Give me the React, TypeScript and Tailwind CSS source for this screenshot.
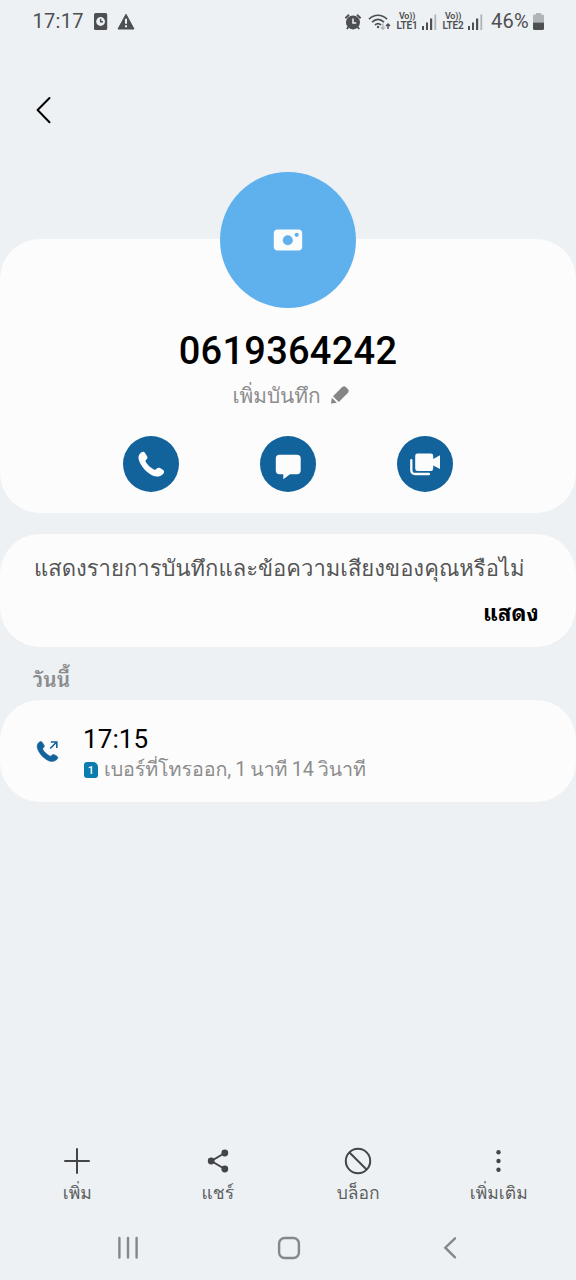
import React from "react";

const handset =
  "M18.5 16.3C20.2 15.2 21.4 15.9 22.2 17.2L24.1 20.2C24.9 21.6 24.4 22.8 23.2 23.8C22.3 24.6 22.3 25.2 23.1 26.4C24.9 29.2 27.8 31.8 30.8 33.4C32 34.1 32.6 34 33.3 33.1C34.3 31.8 35.6 31.3 37 32.1L39.8 33.8C41.2 34.7 41.6 36 40.5 37.4C38.3 40.4 33.7 41.5 29.5 39.5C23.5 36.5 18.6 31.2 16.4 25.6C14.7 21.4 15.5 18.2 18.5 16.3Z";

function Signal() {
  return (
    <svg width="15" height="16" viewBox="0 0 15 16" fill="#4d4f51">
      <rect x="0" y="12" width="2" height="4" />
      <rect x="4" y="8.5" width="2" height="7.5" />
      <rect x="8" y="4.5" width="2.2" height="11.5" />
      <rect x="12.4" y="0.5" width="1.8" height="15.5" fill="#b1b4b6" />
    </svg>
  );
}

function Volte({ slot }: { slot: string }) {
  return (
    <div className="flex w-[22px] flex-col items-center font-semibold text-[#4d4f51]">
      <span className="text-[9px] leading-[9px] tracking-[-0.2px] whitespace-nowrap">Vo))</span>
      <span className="text-[10px] leading-[10px] tracking-[-0.2px] whitespace-nowrap">LTE{slot}</span>
    </div>
  );
}

function StatusBar() {
  return (
    <header className="flex h-11 items-start text-[#4d4f51]">
      <div className="flex h-[43px] w-full items-center pl-[32.5px]">
        <span className="w-[61.5px] text-[20px] leading-[43px] tracking-[0.3px]">17:17</span>
        <svg width="14" height="17" viewBox="0 0 14 17">
          <rect x="0" y="0" width="13.2" height="17" rx="1.6" fill="#4d4f51" />
          <circle cx="6.6" cy="8.5" r="4.4" fill="#edf1f4" />
          <path d="M6.6 5.8V8.8H9" fill="none" stroke="#4d4f51" strokeWidth="1.4" />
        </svg>
        <svg className="ml-[8.5px]" width="18" height="17" viewBox="0 0 18 17">
          <path d="M9 1.2L17 16H1Z" fill="#4d4f51" stroke="#4d4f51" strokeLinejoin="round" />
          <path d="M9 5.8V10.8M9 12.2V14.2" stroke="#edf1f4" strokeWidth="2" />
        </svg>
        <div className="ml-[209.5px] flex items-center">
          <svg width="18" height="18" viewBox="0 0 18 18">
            <circle cx="9" cy="9.4" r="7" fill="#4d4f51" />
            <path d="M1.4 5.2L5 1.8M13 1.8L16.6 5.2M4.4 14L2.8 16M13.6 14L15.2 16" stroke="#4d4f51" strokeWidth="1.9" />
            <path d="M9 5.5V10H12.2" fill="none" stroke="#edf1f4" strokeWidth="1.5" />
          </svg>
          <svg className="ml-[6px]" width="23" height="18" viewBox="0 0 23 18" fill="none" stroke="#4d4f51">
            <path d="M1 6.2C6.5.9 13.5.9 19 6.2M4 9.2C8 5.4 12 5.4 16 9.2M7 12C9 10.2 11 10.2 13 12" strokeWidth="1.7" />
            <circle cx="10" cy="14" r="1.2" fill="#4d4f51" stroke="none" />
            <path d="M14.8 10.5V16M12.8 14.2L14.8 16.2L16.8 14.2" stroke="#b1b4b6" strokeWidth="1.4" />
            <path d="M20 16V11M18 13L20 11L22 13" strokeWidth="1.5" />
          </svg>
          <div className="ml-[5px]"><Volte slot="1" /></div>
          <div className="ml-[4px]"><Signal /></div>
          <div className="ml-[5px]"><Volte slot="2" /></div>
          <div className="ml-[4px]"><Signal /></div>
          <span className="ml-[8px] w-[42px] text-[20px] leading-[43px] tracking-[0.2px]">46%</span>
          <svg width="11" height="17" viewBox="0 0 11 17">
            <path d="M3 0H8V1.5H9.5Q11 1.5 11 3V9.5H0V3Q0 1.5 1.5 1.5H3Z" fill="#b1b4b6" />
            <path d="M0 9.5H11V15.5Q11 17 9.5 17H1.5Q0 17 0 15.5Z" fill="#4d4f51" />
          </svg>
        </div>
      </div>
    </header>
  );
}

function RoundButton({ children }: { children: React.ReactNode }) {
  return (
    <button className="flex size-14 items-center justify-center rounded-full bg-[#12629c]">
      <svg width="56" height="56" viewBox="0 0 56 56" fill="#fcfcfc">{children}</svg>
    </button>
  );
}

function Action({ label, children }: { label: string; children: React.ReactNode }) {
  return (
    <button className="flex w-[140.5px] flex-col items-center">
      <svg width="30" height="30" viewBox="0 0 30 30" fill="none" stroke="#434547">{children}</svg>
      <span className="mt-[3px] text-[17.5px] leading-[28px] whitespace-nowrap text-[#5d5f61]">{label}</span>
    </button>
  );
}

export default function App() {
  return (
    <div className="flex h-[1280px] w-[576px] flex-col overflow-hidden bg-[#edf1f4] font-[Roboto,Loma,sans-serif]">
      <StatusBar />
      <nav className="flex h-[128px] pt-[50px] pl-[34px]">
        <svg width="20" height="32" viewBox="0 0 20 32" fill="none" stroke="#000" strokeWidth="2">
          <path d="M15.5 4L3.6 16L15.5 28.2" strokeLinecap="round" strokeLinejoin="round" />
        </svg>
      </nav>
      <div className="flex h-[67px] justify-center">
        <div className="relative z-10 flex size-[136px] shrink-0 items-center justify-center rounded-full bg-[#5fb1ee]">
          <svg width="30" height="22" viewBox="0 0 30 22">
            <rect x="0.8" y="0.6" width="28.4" height="20.8" rx="4" fill="#fcfcfc" />
            <circle cx="14.8" cy="11.2" r="5" fill="#5fb1ee" />
            <circle cx="23.7" cy="5.8" r="2.1" fill="#5fb1ee" />
          </svg>
        </div>
      </div>
      <section className="flex h-[274px] flex-col items-center rounded-[40px] bg-[#fcfcfc] pt-[88px]">
        <h1 className="text-[38px] leading-[48px] font-medium tracking-[0.25px] text-black">0619364242</h1>
        <div className="mt-[6px] flex h-[30px] items-center gap-[9px] pl-[6px] text-[#8d8d8d]">
          <span className="text-[20.8px] leading-[30px]">เพิ่มบันทึก</span>
          <svg className="-translate-y-px" width="20" height="20" viewBox="0 0 20 20" fill="#858585">
            <path d="M1 18.6L1.8 12.8L6.8 17.8Z" />
            <path d="M3 11.2L12.2 2Q14 .4 15.8 2L18 4.2Q19.6 6 18 7.8L8.8 17Z" />
          </svg>
        </div>
        <div className="mt-[25px] flex gap-[81px]">
          <RoundButton><path d={handset} /></RoundButton>
          <RoundButton>
            <path d="M19.5 18.8H37Q40.7 18.8 40.7 22.5V34.5Q40.7 38.2 37 38.2H30L23.3 43.3V38.2H19.5Q15.8 38.2 15.8 34.5V22.5Q15.8 18.8 19.5 18.8Z" />
          </RoundButton>
          <RoundButton>
            <path d="M20.5 17.4H33.8Q36.2 17.4 36.2 19.8V23L43 19.2V33L36.2 29.4V32.5Q36.2 35 33.8 35H20.5Q18.2 35 18.2 32.5V19.8Q18.2 17.4 20.5 17.4Z" />
            <path d="M14.3 24.2V34Q14.3 38 18.3 38H32" fill="none" stroke="#fcfcfc" strokeWidth="2.3" strokeLinecap="round" />
          </RoundButton>
        </div>
      </section>
      <section className="mt-[21px] flex h-[113px] flex-col rounded-[40px] bg-[#fcfcfc] pt-[19px] pr-[37px] pl-[34px]">
        <p className="text-[22px] leading-[32px] tracking-[0.03px] whitespace-nowrap text-[#555]">แสดงรายการบันทึกและข้อความเสียงของคุณหรือไม่</p>
        <button className="mt-[14px] self-end font-[Roboto,'Noto_Sans_Thai_Looped',Loma,sans-serif] text-[22px] leading-[30px] font-bold tracking-[0.2px] text-black">แสดง</button>
      </section>
      <h2 className="h-[53px] pt-[19px] pl-[33px] font-[Roboto,'Noto_Sans_Thai_Looped',Loma,sans-serif] text-[20.5px] leading-[28px] font-semibold tracking-[0.3px] text-[#8a8c8e]">วันนี้</h2>
      <section className="flex h-[102px] rounded-[40px] bg-[#fcfcfc] pl-[34px]">
        <svg className="mt-[37px]" width="28" height="28" viewBox="0 0 28 28">
          <g transform="translate(-9.5 -8.3) scale(0.81)"><path d={handset} fill="#12629c" stroke="#12629c" strokeWidth="0.6" /></g>
          <path d="M16.2 11.5L22.7 5M16.8 5H22.8V11" fill="none" stroke="#12629c" strokeWidth="1.6" />
        </svg>
        <div className="ml-[21px] pt-[22px]">
          <p className="text-[26px] leading-[34px] tracking-[0.1px] text-black">17:15</p>
          <p className="flex h-[28px] items-center gap-[6px] text-[19.7px] leading-[28px] whitespace-nowrap text-[#8d8d8d]">
            <span className="ml-[1px] flex h-[16px] w-[14px] items-center justify-center rounded-[3px] rounded-tr-[5px] bg-[#0b7cae] text-[11px] leading-none font-medium text-white">1</span>
            <span className="tracking-[-0.1px] [word-spacing:-0.6px]">เบอร์ที่โทรออก, 1 นาที 14 วินาที</span>
          </p>
        </div>
      </section>
      <div className="grow" />
      <footer className="flex h-[134px] flex-col">
        <div className="flex justify-center">
          <Action label="เพิ่ม"><path d="M15 3V27M3 15H27" strokeWidth="2" strokeLinecap="round" /></Action>
          <Action label="แชร์">
            <path d="M21.8 7L8.3 15L21.8 23" strokeWidth="2" />
            <g fill="#434547" stroke="none"><circle cx="21.8" cy="7" r="3.4" /><circle cx="8.2" cy="15" r="3.4" /><circle cx="21.8" cy="23" r="3.4" /></g>
          </Action>
          <Action label="บล็อก"><circle cx="15" cy="15" r="12.2" strokeWidth="2" /><path d="M6.5 6.5L23.5 23.5" strokeWidth="2" /></Action>
          <Action label="เพิ่มเติม"><g fill="#434547" stroke="none"><circle cx="14.5" cy="6.3" r="2.2" /><circle cx="14.5" cy="15" r="2.2" /><circle cx="14.5" cy="23.7" r="2.2" /></g></Action>
        </div>
        <svg className="mt-[15.5px]" width="576" height="48" viewBox="0 0 576 48" fill="none" stroke="#85888a" strokeWidth="2.4" strokeLinecap="round">
          <path d="M119.4 15V34.5M128 15V34.5M136.6 15V34.5" />
          <rect x="279.1" y="15" width="19.8" height="20" rx="5.5" />
          <path d="M455 15.3L445.3 24.7L455 34.3" />
        </svg>
      </footer>
    </div>
  );
}
